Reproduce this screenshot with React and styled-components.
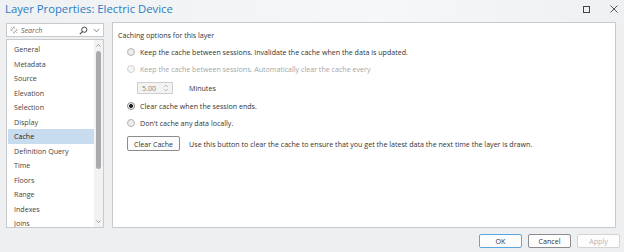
import React from "react";
import styled, { createGlobalStyle } from "styled-components";

const GlobalStyle = createGlobalStyle`
  html, body {
    margin: 0;
    padding: 0;
    background: #eeeff1;
    width: 624px;
    height: 252px;
    overflow: hidden;
  }
  * { box-sizing: border-box; }
`;

const pages = [
  "General",
  "Metadata",
  "Source",
  "Elevation",
  "Selection",
  "Display",
  "Cache",
  "Definition Query",
  "Time",
  "Floors",
  "Range",
  "Indexes",
  "Joins",
];

const App = () => {
  return (
    <Dialog>
      <GlobalStyle />
      <TitleBar>
        <h1>Layer Properties: Electric Device</h1>
        <div className="controls">
          <span className="max" />
          <svg width="8" height="8" viewBox="0 0 8 8">
            <path d="M0.5 0.5 L7.5 7.5 M7.5 0.5 L0.5 7.5" stroke="#444" strokeWidth="0.9" />
          </svg>
        </div>
      </TitleBar>
      <Body>
        <Sidebar>
          <SearchBox>
            <svg width="8" height="8" viewBox="0 0 8 8" className="spark">
              <path d="M4 0.5 V2.5 M4 5.5 V7.5 M0.5 4 H2.5 M5.5 4 H7.5 M1.5 1.5 L2.6 2.6 M5.4 5.4 L6.5 6.5" stroke="#666" strokeWidth="0.8" />
            </svg>
            <span className="placeholder">Search</span>
            <svg width="9" height="9" viewBox="0 0 9 9" className="glass">
              <circle cx="5.3" cy="3.7" r="2.6" fill="none" stroke="#444" strokeWidth="1" />
              <path d="M3.4 5.6 L0.8 8.2" stroke="#444" strokeWidth="1.1" />
            </svg>
            <svg width="7" height="5" viewBox="0 0 7 5" className="chev">
              <path d="M0.8 1 L3.5 3.8 L6.2 1" fill="none" stroke="#666" strokeWidth="0.8" />
            </svg>
          </SearchBox>
          <PageList>
            <ul>
              {pages.map((p) => (
                <PageItem key={p} $active={p === "Cache"}>
                  {p}
                </PageItem>
              ))}
            </ul>
            <ScrollBar>
              <svg width="7" height="5" viewBox="0 0 7 5">
                <path d="M1.5 3.5 L3.5 1.5 L5.5 3.5" fill="none" stroke="#888" strokeWidth="0.8" />
              </svg>
              <div className="track">
                <div className="thumb" />
              </div>
              <svg width="7" height="5" viewBox="0 0 7 5">
                <path d="M1.5 1.5 L3.5 3.5 L5.5 1.5" fill="none" stroke="#888" strokeWidth="0.8" />
              </svg>
            </ScrollBar>
          </PageList>
        </Sidebar>
        <Panel>
          <Heading>Caching options for this layer</Heading>
          <Options>
            <Option>
              <Radio />
              <span>Keep the cache between sessions. Invalidate the cache when the data is updated.</span>
            </Option>
            <Option $disabled>
              <Radio $disabled />
              <span>Keep the cache between sessions. Automatically clear the cache every</span>
            </Option>
            <SpinRow>
              <Spinner>
                <span>5.00</span>
                <div className="arrows">
                  <svg width="6" height="4" viewBox="0 0 6 4">
                    <path d="M1 3 L3 1 L5 3" fill="none" stroke="#aaa" strokeWidth="0.7" />
                  </svg>
                  <svg width="6" height="4" viewBox="0 0 6 4">
                    <path d="M1 1 L3 3 L5 1" fill="none" stroke="#aaa" strokeWidth="0.7" />
                  </svg>
                </div>
              </Spinner>
              <span>Minutes</span>
            </SpinRow>
            <Option>
              <Radio $checked />
              <span>Clear cache when the session ends.</span>
            </Option>
            <Option>
              <Radio />
              <span>Don't cache any data locally.</span>
            </Option>
          </Options>
          <ClearRow>
            <Button>Clear Cache</Button>
            <span>
              Use this button to clear the cache to ensure that you get the latest data the next time the layer is drawn.
            </span>
          </ClearRow>
        </Panel>
      </Body>
      <Footer>
        <Button $primary $wide>OK</Button>
        <Button $wide>Cancel</Button>
        <Button $wide $disabled>Apply</Button>
      </Footer>
    </Dialog>
  );
};

export default App;

const Dialog = styled.div`
  width: 624px;
  height: 252px;
  display: flex;
  flex-direction: column;
  background: #eeeff1;
  font-family: "Open Sans", "Noto Sans", sans-serif;
  font-size: 7.1px;
  color: #333;
`;

const TitleBar = styled.div`
  height: 22px;
  display: flex;
  align-items: flex-start;
  justify-content: space-between;
  padding: 2px 6px 0 5px;
  background: linear-gradient(to right, #eef0f2 0%, #f6f7f8 60%, #eef0f2 100%);
  h1 {
    margin: 0;
    font-size: 11.3px;
    font-weight: 400;
    color: #2a7cc4;
    line-height: 14px;
  }
  .controls {
    display: flex;
    align-items: center;
    gap: 20px;
    padding-top: 3px;
    .max {
      width: 7px;
      height: 7px;
      border: 1px solid #444;
    }
  }
`;

const Body = styled.div`
  flex: 1;
  display: flex;
  gap: 8px;
  padding: 0 8px 0 6px;
  height: 206px;
  max-height: 206px;
`;

const Sidebar = styled.div`
  width: 98px;
  display: flex;
  flex-direction: column;
  gap: 2px;
  padding-top: 1px;
`;

const SearchBox = styled.div`
  height: 14px;
  display: flex;
  align-items: center;
  background: #fff;
  border: 1px solid #c9cacc;
  padding: 0 3px 0 3px;
  .spark { margin-right: 3px; }
  .placeholder {
    flex: 1;
    font-style: italic;
    color: #666;
  }
  .glass { margin-right: 5px; }
`;

const PageList = styled.div`
  flex: 1;
  display: flex;
  background: #fff;
  border: 1px solid #c9cacc;
  overflow: hidden;
  ul {
    list-style: none;
    margin: 0;
    padding: 2px 0 0 1px;
    flex: 1;
  }
`;

const PageItem = styled.li`
  height: 14.5px;
  line-height: 14.5px;
  padding-left: 6px;
  color: ${(p) => (p.$active ? "#222" : "#444")};
  background: ${(p) => (p.$active ? "#c8dcef" : "transparent")};
  white-space: nowrap;
`;

const ScrollBar = styled.div`
  width: 9px;
  display: flex;
  flex-direction: column;
  align-items: center;
  background: #f2f2f2;
  padding: 3px 0;
  .track {
    flex: 1;
    width: 100%;
    display: flex;
    justify-content: center;
    padding-top: 3px;
  }
  .thumb {
    width: 5px;
    height: 118px;
    border-radius: 3px;
    background: #aaaaac;
  }
`;

const Panel = styled.div`
  flex: 1;
  background: #fff;
  border: 1px solid #c9cacc;
  padding: 7px 5px;
  display: flex;
  flex-direction: column;
`;

const Heading = styled.div`
  line-height: 10px;
  margin-bottom: 3px;
`;

const Options = styled.div`
  display: flex;
  flex-direction: column;
  padding-left: 9px;
`;

const Option = styled.label`
  height: 17.5px;
  display: flex;
  align-items: center;
  gap: 5px;
  color: ${(p) => (p.$disabled ? "#a6a6a6" : "#333")};
`;

const Radio = styled.span`
  width: 8px;
  height: 8px;
  border-radius: 50%;
  border: 1px solid ${(p) => (p.$disabled ? "#d2d2d2" : p.$checked ? "#8a8a8a" : "#b4b4b4")};
  background: ${(p) =>
    p.$checked
      ? "radial-gradient(circle, #222 0 1.8px, #f4f4f4 2.2px)"
      : p.$disabled
      ? "#f4f4f4"
      : "#ececec"};
`;

const SpinRow = styled.div`
  height: 19px;
  display: flex;
  align-items: center;
  gap: 16px;
  padding-left: 10px;
`;

const Spinner = styled.div`
  width: 36px;
  height: 12px;
  display: flex;
  align-items: center;
  justify-content: space-between;
  border: 1px solid #cfcfcf;
  background: #f3f3f3;
  padding: 0 3px 0 4px;
  color: #888;
  .arrows {
    display: flex;
    flex-direction: column;
  }
`;

const ClearRow = styled.div`
  display: flex;
  align-items: center;
  gap: 9px;
  padding-left: 9px;
  margin-top: 4px;
`;

const Button = styled.button`
  font-family: inherit;
  font-size: 7.1px;
  height: ${(p) => (p.$wide ? "14px" : "15px")};
  width: ${(p) => (p.$wide ? "43px" : "auto")};
  padding: 0 6px;
  background: #fdfdfd;
  color: ${(p) => (p.$disabled ? "#b5b5b5" : "#333")};
  border: 1px solid ${(p) => (p.$primary ? "#5aa7e0" : p.$disabled ? "#d4d4d4" : "#8c8c8c")};
  border-radius: 2px;
`;

const Footer = styled.div`
  display: flex;
  justify-content: flex-end;
  gap: 6px;
  padding: 6px 4px 0 0;
  height: 24px;
`;
